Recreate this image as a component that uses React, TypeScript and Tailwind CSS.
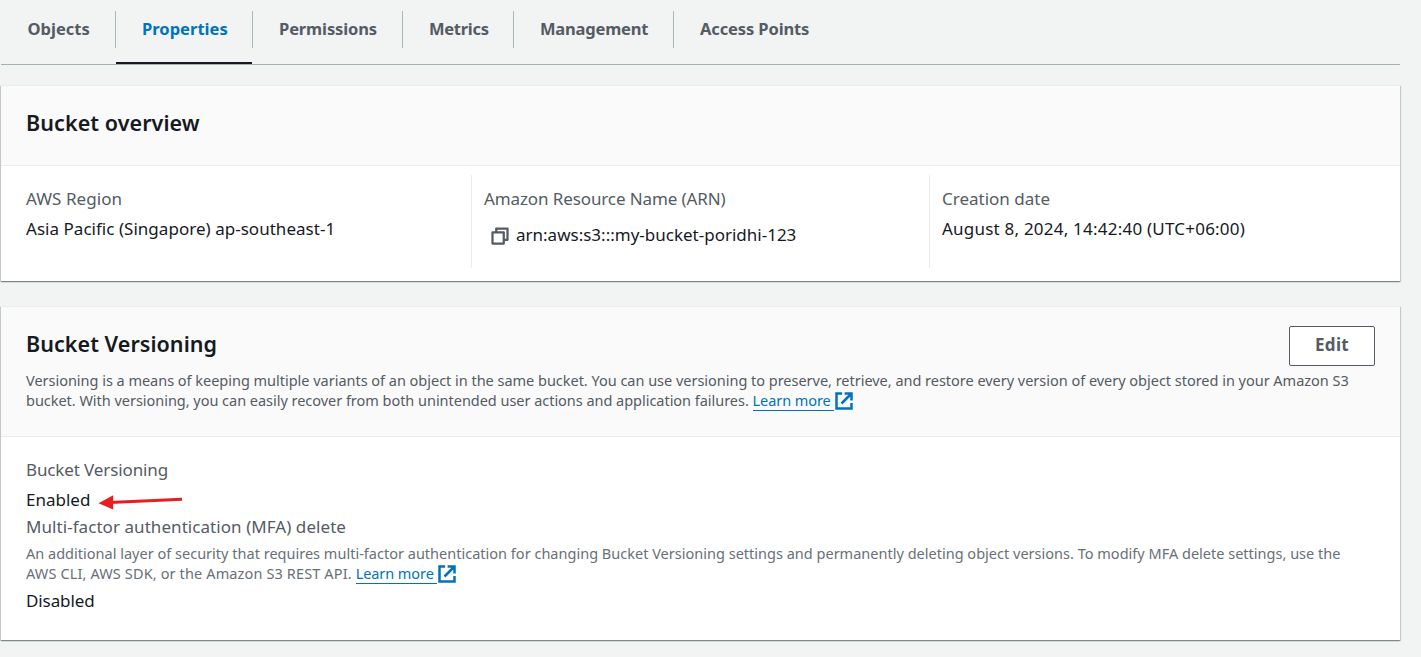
import React from "react";

const tabs = [
  { label: "Objects", width: "w-[115px]", pad: "pl-[26.4px]", track: "tracking-[0.03px]" },
  { label: "Properties", width: "w-[137px]", pad: "pl-[26px]", track: "tracking-[0.02px]", active: true },
  { label: "Permissions", width: "w-[150px]", pad: "pl-[26px]", track: "tracking-[-0.12px]" },
  { label: "Metrics", width: "w-[111px]", pad: "pl-[26px]", track: "tracking-[-0.28px]" },
  { label: "Management", width: "w-[160px]", pad: "pl-[26px]", track: "tracking-[-0.2px]" },
  { label: "Access Points", width: "w-[160px]", pad: "pl-[26px]", track: "tracking-[-0.12px]" },
];

function ExternalIcon() {
  return (
    <svg className="inline-block h-5 w-5 align-[-5px]" viewBox="0 0 16 16" fill="none" stroke="#0073bb" strokeWidth="2">
      <path d="M6.5 2H2v12h12V9.5M8.5 2H14v5.5M6 10l8-8" />
    </svg>
  );
}

function CopyIcon() {
  return (
    <svg className="mt-[2px] h-5 w-5 shrink-0" viewBox="0 0 16 16" fill="none" stroke="#545b64" strokeWidth="1.8" strokeLinejoin="round">
      <path d="M2 5h9v9H2z" />
      <path d="M5 5V2h9v9h-3" />
    </svg>
  );
}

function LearnMore() {
  return (
    <a className="whitespace-nowrap text-[#0073bb]">
      <span className="-mb-[1px] inline-block h-[21px] border-b border-[#0073bb] pr-[3px] align-top leading-5 tracking-[-0.07px]">Learn more</span>
      <ExternalIcon />
    </a>
  );
}

function Card({ className, children }: { className: string; children: React.ReactNode }) {
  return (
    <section
      className={`flex w-[1399px] flex-col border-t border-[#eaeded] bg-white shadow-[0_1px_1px_0_rgba(0,28,36,0.3),1px_1px_1px_0_rgba(0,28,36,0.15),-1px_1px_1px_0_rgba(0,28,36,0.15)] ${className}`}
    >
      {children}
    </section>
  );
}

export default function App() {
  return (
    <div className="flex h-[657px] w-[1421px] flex-col overflow-hidden bg-[#f2f3f3] pl-[1px] font-['Noto_Sans',sans-serif] text-[17px] leading-6 text-[#16191f]">
      <nav className="flex h-[65px] w-[1399px] shrink-0 border-b border-[#a2b1b2]">
        {tabs.map((t, i) => (
          <div key={t.label} className={`flex h-full flex-col text-[16.5px] font-bold whitespace-nowrap ${t.width} ${t.active ? "text-[#0073bb]" : "text-[#545b64]"}`}>
            <div className={`mt-[11px] h-[37px] pt-[6px] ${t.pad} ${t.track} ${i < tabs.length - 1 ? "border-r border-[#aab7b8]" : ""}`}>{t.label}</div>
            {t.active && <div className="mt-[14px] mr-[1px] h-[2px] bg-[#16191f]" />}
          </div>
        ))}
      </nav>

      <Card className="mt-5 h-[196px] shrink-0">
        <header className="h-[80px] border-b border-[#eaeded] bg-[#fafafa] pt-[23px] pl-[25px]">
          <h2 className="text-[21.5px] leading-7 font-semibold tracking-[0.08px]">Bucket overview</h2>
        </header>
        <div className="flex pt-[9px]">
          <div className="h-[93px] w-[471px] border-r border-[#eaeded] pt-3 pl-[25px]">
            <div className="tracking-[0.05px] text-[#545b64]">AWS Region</div>
            <div className="mt-[6px] tracking-[0.03px]">Asia Pacific (Singapore) ap-southeast-1</div>
          </div>
          <div className="h-[93px] w-[458px] border-r border-[#eaeded] pt-3 pl-3">
            <div className="tracking-[-0.11px] text-[#545b64]">Amazon Resource Name (ARN)</div>
            <div className="mt-3 flex items-center gap-[6px] pl-[6px]">
              <CopyIcon />
              <span>arn:aws:s3:::my-bucket-poridhi-123</span>
            </div>
          </div>
          <div className="pt-3 pl-3">
            <div className="text-[#545b64]">Creation date</div>
            <div className="mt-[6px] tracking-[0.22px]">August 8, 2024, 14:42:40 (UTC+06:00)</div>
          </div>
        </div>
      </Card>

      <Card className="mt-[25px] h-[334px] shrink-0">
        <header className="flex h-[130px] border-b border-[#eaeded] bg-[#fafafa] pt-[19px] pl-[25px]">
          <div className="w-[1263px] shrink-0 pt-1">
            <h2 className="text-[21.5px] leading-7 font-semibold tracking-[0.05px]">Bucket Versioning</h2>
            <p className="mt-3 text-[14.5px] leading-5 whitespace-nowrap text-[#545b64]">
              <span className="block tracking-[-0.02px]">Versioning is a means of keeping multiple variants of an object in the same bucket. You can use versioning to preserve, retrieve, and restore every version of every object stored in your Amazon S3</span>
              <span className="tracking-[-0.03px]">bucket. With versioning, you can easily recover from both unintended user actions and application failures. </span>
              <LearnMore />
            </p>
          </div>
          <button className="h-10 w-[86px] rounded-[2px] border border-[#545b64] bg-white pb-[3px] text-[17px] font-bold tracking-[0.3px] text-[#545b64]">Edit</button>
        </header>
        <div className="pt-[21px] pl-[25px]">
          <div className="tracking-[-0.12px] text-[#545b64]">Bucket Versioning</div>
          <div className="mt-[6px] flex items-center">
            <span>Enabled</span>
            <svg className="mt-[4px] ml-[8px] h-5 w-[90px]" viewBox="0 0 90 20">
              <path d="M12 10.4 84 7.2" stroke="#e81e1e" strokeWidth="3" />
              <path d="M0.5 11.2 15.2 3.3v14.3z" fill="#e81e1e" />
            </svg>
          </div>
          <div className="mt-[3px] tracking-[0.06px] text-[#545b64]">Multi-factor authentication (MFA) delete</div>
          <p className="mt-1 text-[14.5px] leading-5 whitespace-nowrap text-[#687078]">
            <span className="block tracking-[0.01px]">An additional layer of security that requires multi-factor authentication for changing Bucket Versioning settings and permanently deleting object versions. To modify MFA delete settings, use the</span>
            <span className="tracking-[0.13px]">AWS CLI, AWS SDK, or the Amazon S3 REST API. </span>
            <LearnMore />
          </p>
          <div className="mt-[5px] tracking-[-0.1px]">Disabled</div>
        </div>
      </Card>
    </div>
  );
}
